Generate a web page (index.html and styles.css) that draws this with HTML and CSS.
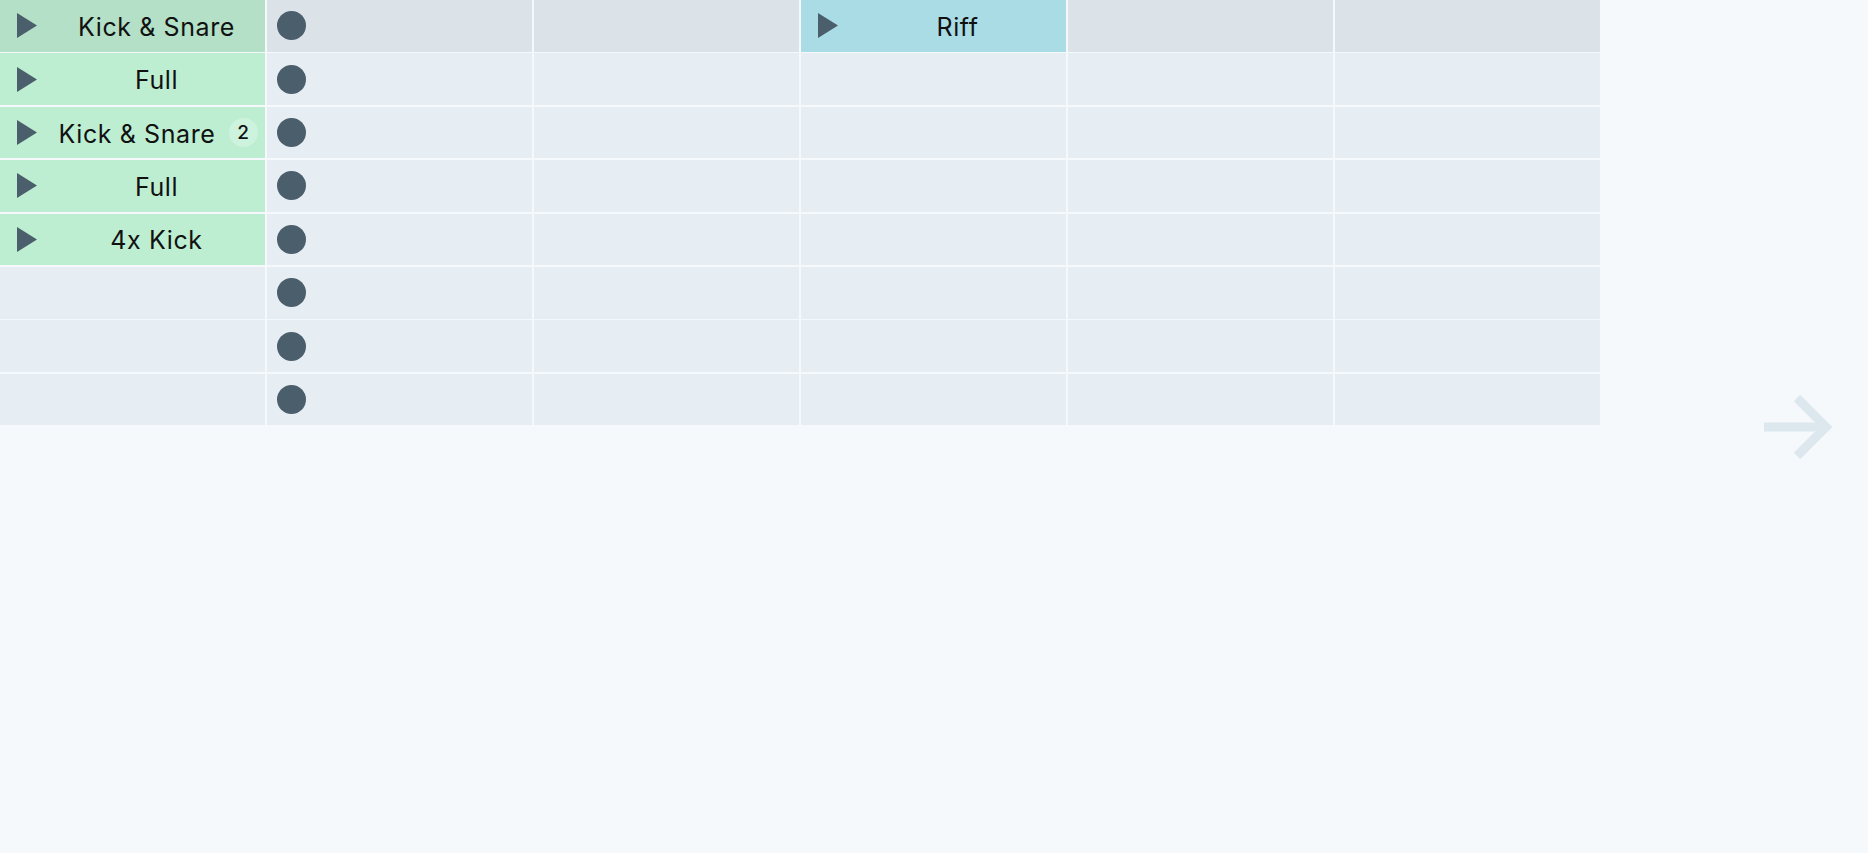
FILE: index.html
```html
<!DOCTYPE html>
<html>
<head>
<meta charset="utf-8">
<link rel="stylesheet" href="styles.css">
</head>
<body>
<div class="grid">
  <!-- row 1 -->
  <div class="cell clip head-green"><svg class="play" viewBox="0 0 20 25"><polygon points="0,0 20,12.5 0,25"/></svg><div class="label"><span>Kick &amp; Snare</span></div></div>
  <div class="cell head rec-cell"><span class="rec"></span></div>
  <div class="cell head"></div>
  <div class="cell clip head-blue"><svg class="play" viewBox="0 0 20 25"><polygon points="0,0 20,12.5 0,25"/></svg><div class="label"><span>Riff</span></div></div>
  <div class="cell head"></div>
  <div class="cell head"></div>
  <!-- row 2 -->
  <div class="cell clip green"><svg class="play" viewBox="0 0 20 25"><polygon points="0,0 20,12.5 0,25"/></svg><div class="label"><span>Full</span></div></div>
  <div class="cell rec-cell"><span class="rec"></span></div>
  <div class="cell"></div><div class="cell"></div><div class="cell"></div><div class="cell"></div>
  <!-- row 3 -->
  <div class="cell clip green"><svg class="play" viewBox="0 0 20 25"><polygon points="0,0 20,12.5 0,25"/></svg><div class="label label-badge"><span>Kick &amp; Snare</span><span class="badge">2</span></div></div>
  <div class="cell rec-cell"><span class="rec"></span></div>
  <div class="cell"></div><div class="cell"></div><div class="cell"></div><div class="cell"></div>
  <!-- row 4 -->
  <div class="cell clip green"><svg class="play" viewBox="0 0 20 25"><polygon points="0,0 20,12.5 0,25"/></svg><div class="label"><span>Full</span></div></div>
  <div class="cell rec-cell"><span class="rec"></span></div>
  <div class="cell"></div><div class="cell"></div><div class="cell"></div><div class="cell"></div>
  <!-- row 5 -->
  <div class="cell clip green"><svg class="play" viewBox="0 0 20 25"><polygon points="0,0 20,12.5 0,25"/></svg><div class="label"><span>4x Kick</span></div></div>
  <div class="cell rec-cell"><span class="rec"></span></div>
  <div class="cell"></div><div class="cell"></div><div class="cell"></div><div class="cell"></div>
  <!-- row 6 -->
  <div class="cell"></div>
  <div class="cell rec-cell"><span class="rec"></span></div>
  <div class="cell"></div><div class="cell"></div><div class="cell"></div><div class="cell"></div>
  <!-- row 7 -->
  <div class="cell"></div>
  <div class="cell rec-cell"><span class="rec"></span></div>
  <div class="cell"></div><div class="cell"></div><div class="cell"></div><div class="cell"></div>
  <!-- row 8 -->
  <div class="cell"></div>
  <div class="cell rec-cell"><span class="rec"></span></div>
  <div class="cell"></div><div class="cell"></div><div class="cell"></div><div class="cell"></div>
</div>
<svg class="next" viewBox="0 0 76 72">
  <line x1="4" y1="36" x2="66" y2="36"/>
  <polyline points="37,7 66,36 37,65"/>
</svg>
</body>
</html>
```
FILE: styles.css
```css
html, body {
  margin: 0;
  padding: 0;
  background: #f5f9fc;
  font-family: Inter, "Noto Sans", "Liberation Sans", sans-serif;
  height: 100%;
  overflow: hidden;
}

.grid {
  display: grid;
  grid-template-columns: repeat(6, 265px);
  grid-auto-rows: 51.6px;
  column-gap: 2px;
  row-gap: 1.8px;
  width: max-content;
}

.cell {
  background: #e6eef4;
  display: flex;
  align-items: center;
  box-sizing: border-box;
}

.cell.head { background: #dbe3e9; }
.cell.head-green { background: #b3e0c6; }
.cell.green { background: #bdeed1; }
.cell.head-blue { background: #aadce6; }

.clip {
  padding-left: 17px;
}

.play {
  width: 20px;
  height: 25px;
  flex: none;
  fill: #4a5e6b;
}

.label {
  flex: 1;
  margin-left: 11px;
  padding-top: 2px;
  display: flex;
  align-items: center;
  justify-content: center;
  font-size: 25px;
  color: #111;
  letter-spacing: 0.6px;
  white-space: nowrap;
}

.label-badge {
  margin-left: 14px;
}

.badge {
  width: 29px;
  height: 29px;
  border-radius: 50%;
  background: #cdf2dd;
  margin-left: 13px;
  margin-top: -2px;
  display: flex;
  align-items: center;
  justify-content: center;
  font-size: 19px;
  font-weight: 500;
  letter-spacing: 0;
}

.rec-cell {
  padding-left: 10px;
}

.rec {
  width: 29px;
  height: 29px;
  border-radius: 50%;
  background: #4a5e6b;
}

.next {
  position: fixed;
  right: 32px;
  top: 50%;
  transform: translateY(-50%);
  width: 76px;
  height: 72px;
  fill: none;
  stroke: #dde7ee;
  stroke-width: 9;
  stroke-linejoin: miter;
}
```
